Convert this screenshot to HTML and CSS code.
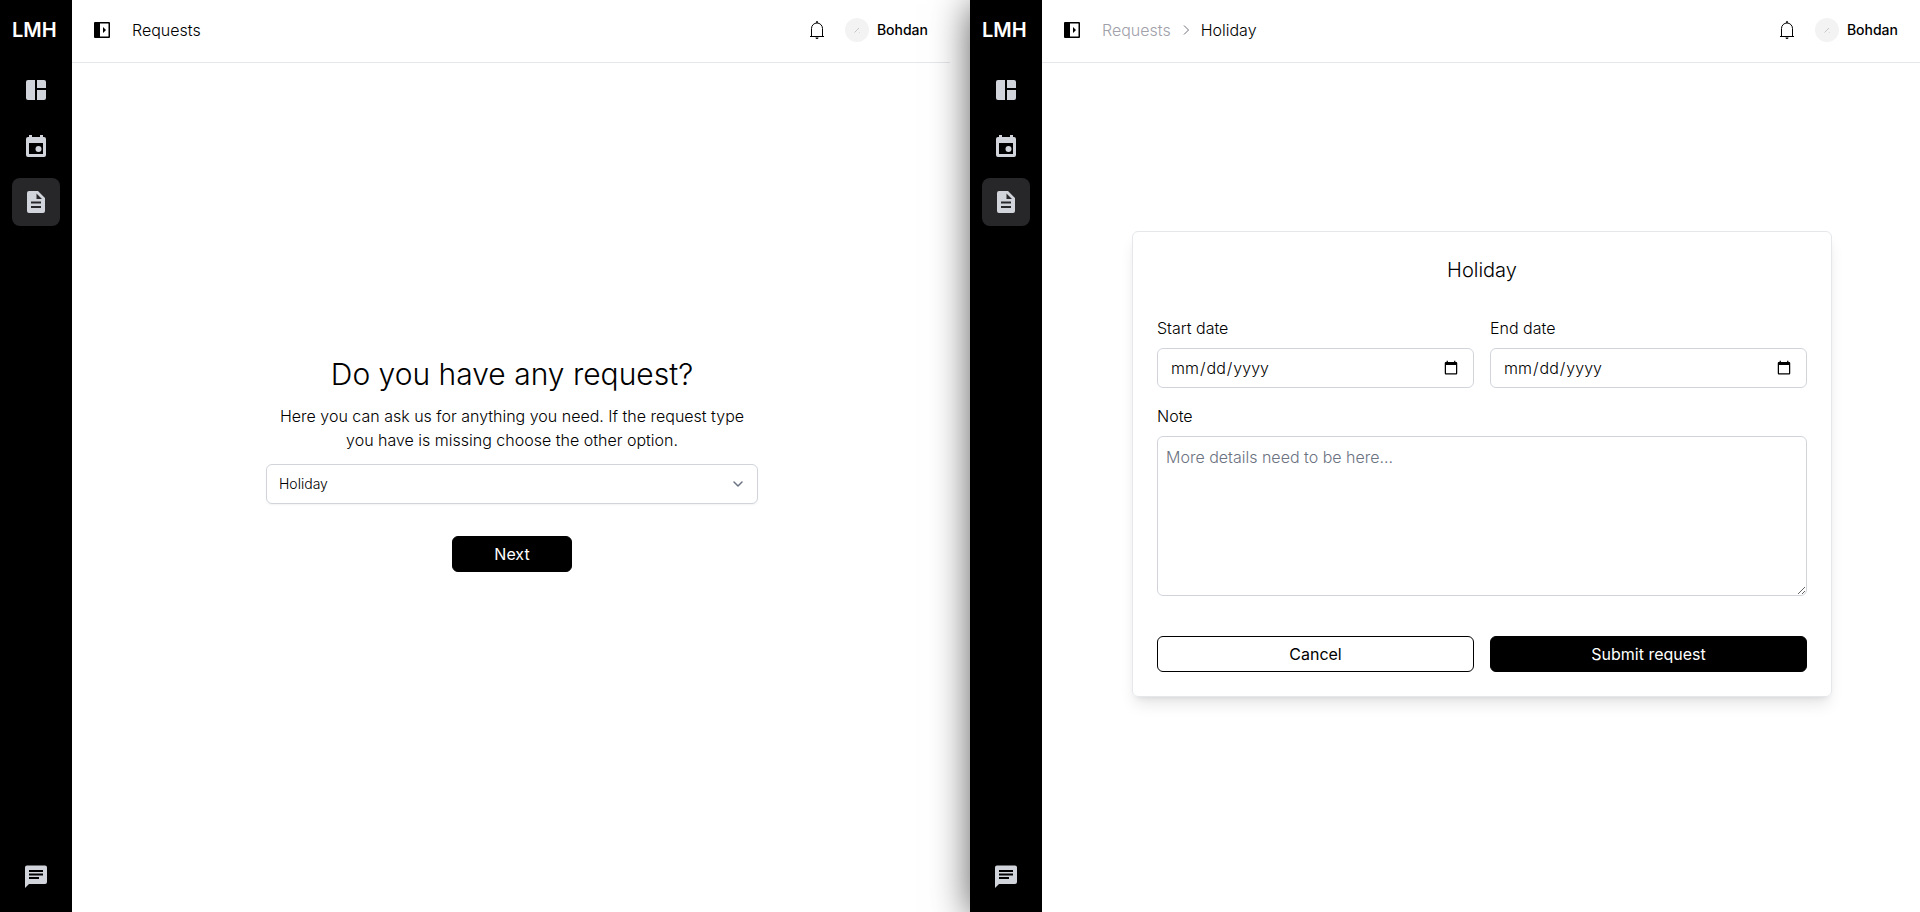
FILE: index.html
```html
<!DOCTYPE html>
<html lang="en">
<head>
<meta charset="utf-8">
<title>LMH – Requests</title>
<link rel="stylesheet" href="styles.css">
</head>
<body>
<svg class="sprite" aria-hidden="true">
  <symbol id="i-dashboard" viewBox="0 0 24 24"><path d="M11 22H4a2 2 0 0 1-2-2V4a2 2 0 0 1 2-2h7zM13 22h7a2 2 0 0 0 2-2v-8h-9zM22 10V4a2 2 0 0 0-2-2h-7v8z"/></symbol>
  <symbol id="i-calendar" viewBox="0 0 24 24"><path fill-rule="evenodd" d="M20 3h-1V1h-3v2H8V1H5v2H4a2 2 0 0 0-2 2v16a2 2 0 0 0 2 2h16a2 2 0 0 0 2-2V5a2 2 0 0 0-2-2zm-1 17H5V9h14z"/><circle cx="14.500" cy="15" r="3"/></symbol>
  <symbol id="i-file" viewBox="0 0 24 24"><path d="M14 1H5a2 2 0 0 0-2 2v18a2 2 0 0 0 2 2h14a2 2 0 0 0 2-2V8zm3 17H7v-2h10zm0-4.500H7v-2h10zM12.500 9V3.500L18 9z"/></symbol>
  <symbol id="i-chat" viewBox="0 0 24 24"><path d="M21 1.500H3a2 2 0 0 0-2 2V24l4-4h16a2 2 0 0 0 2-2V3.500a2 2 0 0 0-2-2zM5 6h14v2H5zm10 9H5v-2h10zm4-3.500H5v-2h14z"/></symbol>
  <symbol id="i-toggle" viewBox="0 0 16 16"><path d="M1 0h14a1 1 0 0 1 1 1v14a1 1 0 0 1-1 1H1a1 1 0 0 1-1-1V1a1 1 0 0 1 1-1zm5 1.500v13h8.500v-13zM9 5l3 3-3 3z"/></symbol>
  <symbol id="i-bell" viewBox="0 0 16 20"><path d="M1 16.500h14M2.500 16.500V8.500a5.500 5.500 0 0 1 11 0v8" fill="none" stroke="currentColor" stroke-width="1"/><path d="M6.500 17.500h3a1.500 1.500 0 0 1-3 0zM7.300 1h1.400v2H7.300z"/></symbol>
  <symbol id="i-down" viewBox="0 0 20 20"><path d="M6 8l4 4 4-4" fill="none" stroke="currentColor" stroke-width="1.500" stroke-linecap="round" stroke-linejoin="round"/></symbol>
  <symbol id="i-right" viewBox="0 0 10 12"><path d="M3 1.500L7.500 6 3 10.500" fill="none" stroke="currentColor" stroke-width="1"/></symbol>
  <symbol id="i-slash" viewBox="0 0 8 8"><path d="M1.500 6.500l2.500-2.500 2-2M6.500 6.500l.5.500" fill="none" stroke="currentColor" stroke-width=".8"/></symbol>
</svg>

<div class="screens">
  <section class="app">
    <aside class="sidebar">
      <div class="logo">LMH</div>
      <nav class="nav">
        <a class="nav-item" href="#" aria-label="Dashboard"><svg class="nav-icon"><use href="#i-dashboard"/></svg></a>
        <a class="nav-item" href="#" aria-label="Calendar"><svg class="nav-icon"><use href="#i-calendar"/></svg></a>
        <a class="nav-item active" href="#" aria-label="Requests"><svg class="nav-icon"><use href="#i-file"/></svg></a>
        <a class="nav-item last" href="#" aria-label="Messages"><svg class="nav-icon"><use href="#i-chat"/></svg></a>
      </nav>
    </aside>
    <div class="page">
      <header class="topbar">
        <button class="icon-btn" type="button" aria-label="Toggle sidebar"><svg class="toggle-icon"><use href="#i-toggle"/></svg></button>
        <div class="crumbs"><span>Requests</span></div>
        <button class="icon-btn bell" type="button" aria-label="Notifications"><svg class="bell-icon"><use href="#i-bell"/></svg></button>
        <div class="user"><span class="avatar"><svg class="avatar-mark"><use href="#i-slash"/></svg></span>Bohdan</div>
      </header>
      <main class="content">
        <form class="picker">
          <h1 class="heading">Do you have any request?</h1>
          <p class="lead">Here you can ask us for anything you need. If the request type you have is missing choose the other option.</p>
          <div class="select-wrap">
            <select class="field select" aria-label="Request type"><option>Holiday</option><option>Other</option></select>
            <svg class="select-icon"><use href="#i-down"/></svg>
          </div>
          <button class="btn primary next" type="button">Next</button>
        </form>
      </main>
    </div>
  </section>

  <section class="app raised">
    <aside class="sidebar">
      <div class="logo">LMH</div>
      <nav class="nav">
        <a class="nav-item" href="#" aria-label="Dashboard"><svg class="nav-icon"><use href="#i-dashboard"/></svg></a>
        <a class="nav-item" href="#" aria-label="Calendar"><svg class="nav-icon"><use href="#i-calendar"/></svg></a>
        <a class="nav-item active" href="#" aria-label="Requests"><svg class="nav-icon"><use href="#i-file"/></svg></a>
        <a class="nav-item last" href="#" aria-label="Messages"><svg class="nav-icon"><use href="#i-chat"/></svg></a>
      </nav>
    </aside>
    <div class="page">
      <header class="topbar">
        <button class="icon-btn" type="button" aria-label="Toggle sidebar"><svg class="toggle-icon"><use href="#i-toggle"/></svg></button>
        <div class="crumbs"><a class="crumb-link" href="#">Requests</a><svg class="crumb-sep"><use href="#i-right"/></svg><span>Holiday</span></div>
        <button class="icon-btn bell" type="button" aria-label="Notifications"><svg class="bell-icon"><use href="#i-bell"/></svg></button>
        <div class="user"><span class="avatar"><svg class="avatar-mark"><use href="#i-slash"/></svg></span>Bohdan</div>
      </header>
      <main class="content">
        <form class="card">
          <h2 class="card-title">Holiday</h2>
          <div class="group">
            <label for="start">Start date</label>
            <input class="field" id="start" type="date">
          </div>
          <div class="group">
            <label for="end">End date</label>
            <input class="field" id="end" type="date">
          </div>
          <div class="group wide">
            <label for="note">Note</label>
            <textarea class="field note" id="note" placeholder="More details need to be here..."></textarea>
          </div>
          <div class="actions">
            <button class="btn outline" type="button">Cancel</button>
            <button class="btn primary" type="button">Submit request</button>
          </div>
        </form>
      </main>
    </div>
  </section>
</div>
</body>
</html>
```

FILE: styles.css
```css
* {
  box-sizing: border-box;
}

body {
  margin: 0;
  background: #fff;
  color: #000;
  font: 300 16px/24px Inter, "Liberation Sans", sans-serif;
}

button,
input,
select,
textarea {
  font: inherit;
  color: inherit;
}

a {
  color: inherit;
  text-decoration: none;
}

svg {
  display: block;
  fill: currentColor;
}

.sprite {
  display: none;
}

.screens {
  display: grid;
  grid-template-columns: 1fr 1fr;
  gap: 20px;
  min-height: 100vh;
}

.app {
  display: flex;
  background: #fff;
}

.raised {
  box-shadow: 0 4px 36px rgba(0, 0, 0, 0.64);
}

/* Sidebar */
.sidebar {
  display: flex;
  flex-direction: column;
  width: 72px;
  padding: 16px 12px 12px;
  background: #000;
  color: #d1d5db;
}

.logo {
  margin-bottom: 22px;
  color: #fff;
  font-size: 20px;
  line-height: 28px;
  font-weight: 600;
}

.nav {
  flex: 1;
  display: flex;
  flex-direction: column;
  gap: 8px;
}

.nav-item {
  display: grid;
  place-items: center;
  height: 48px;
  border-radius: 8px;
}

.nav-item.active {
  background: #27272a;
}

.nav-item.last {
  margin-top: auto;
}

.nav-icon {
  width: 24px;
  height: 24px;
}

/* Top bar */
.page {
  flex: 1;
  display: flex;
  flex-direction: column;
}

.topbar {
  display: flex;
  align-items: center;
  height: 63px;
  padding: 0 22px 2px;
  border-bottom: 1px solid #e5e7eb;
}

.icon-btn {
  padding: 0;
  border: 0;
  background: none;
}

.toggle-icon {
  width: 16px;
  height: 16px;
}

.crumbs {
  display: flex;
  align-items: center;
  margin-left: 22px;
}

.crumb-link {
  color: #a1a1aa;
}

.crumb-sep {
  width: 10px;
  height: 12px;
  margin: 0 10px;
  color: #71717a;
}

.bell {
  margin-left: auto;
}

.bell-icon {
  width: 16px;
  height: 20px;
}

.user {
  display: flex;
  align-items: center;
  gap: 8px;
  margin-left: 20px;
  font-size: 14px;
  line-height: 20px;
  font-weight: 500;
}

.avatar {
  display: grid;
  place-items: center;
  width: 24px;
  height: 24px;
  border-radius: 50%;
  background: #f3f3f3;
  color: #bbb;
}

.avatar-mark {
  width: 8px;
  height: 8px;
}

/* Content */
.content {
  flex: 1;
  display: grid;
  place-items: center;
  padding: 0 23px 48px 25px;
}

.picker {
  display: flex;
  flex-direction: column;
  width: 100%;
  max-width: 492px;
}

.heading {
  margin: 0 0 12px;
  font-size: 30px;
  line-height: 36px;
  font-weight: 300;
  text-align: center;
}

.lead {
  margin: 0 0 12px;
  text-align: center;
}

.field {
  display: block;
  width: 100%;
  height: 40px;
  padding: 8px 12px;
  border: 1px solid #d1d5db;
  border-radius: 6px;
  background: #fff;
}

.select-wrap {
  display: grid;
  align-items: center;
}

.select-wrap > * {
  grid-area: 1 / 1;
}

.select {
  appearance: none;
  font-size: 14px;
  line-height: 20px;
  box-shadow: 0 1px 2px rgba(0, 0, 0, 0.05);
}

.select-icon {
  justify-self: end;
  width: 20px;
  height: 20px;
  margin-right: 10px;
  color: #6b7280;
  pointer-events: none;
}

.btn {
  height: 36px;
  padding: 0 16px;
  border: 1px solid #000;
  border-radius: 6px;
  font-weight: 400;
}

.primary {
  background: #000;
  color: #fff;
}

.outline {
  background: #fff;
}

.next {
  align-self: center;
  width: 120px;
  margin-top: 32px;
}

/* Holiday form */
.card {
  display: grid;
  grid-template-columns: 1fr 1fr;
  gap: 16px;
  width: 100%;
  max-width: 700px;
  padding: 24px;
  border: 1px solid #e5e7eb;
  border-radius: 6px;
  box-shadow: 0 10px 15px -3px rgba(0, 0, 0, 0.1), 0 4px 6px -4px rgba(0, 0, 0, 0.1);
}

.card-title {
  grid-column: 1 / -1;
  margin: 0 0 16px;
  font-size: 20px;
  line-height: 28px;
  font-weight: 300;
  text-align: center;
}

.group {
  display: grid;
  gap: 8px;
}

.wide {
  grid-column: 1 / -1;
}

.note {
  height: 160px;
  padding: 8px;
  resize: vertical;
}

.note::placeholder {
  color: #6b7280;
}

.actions {
  grid-column: 1 / -1;
  display: grid;
  grid-template-columns: 1fr 1fr;
  gap: 16px;
  margin-top: 24px;
}
```
